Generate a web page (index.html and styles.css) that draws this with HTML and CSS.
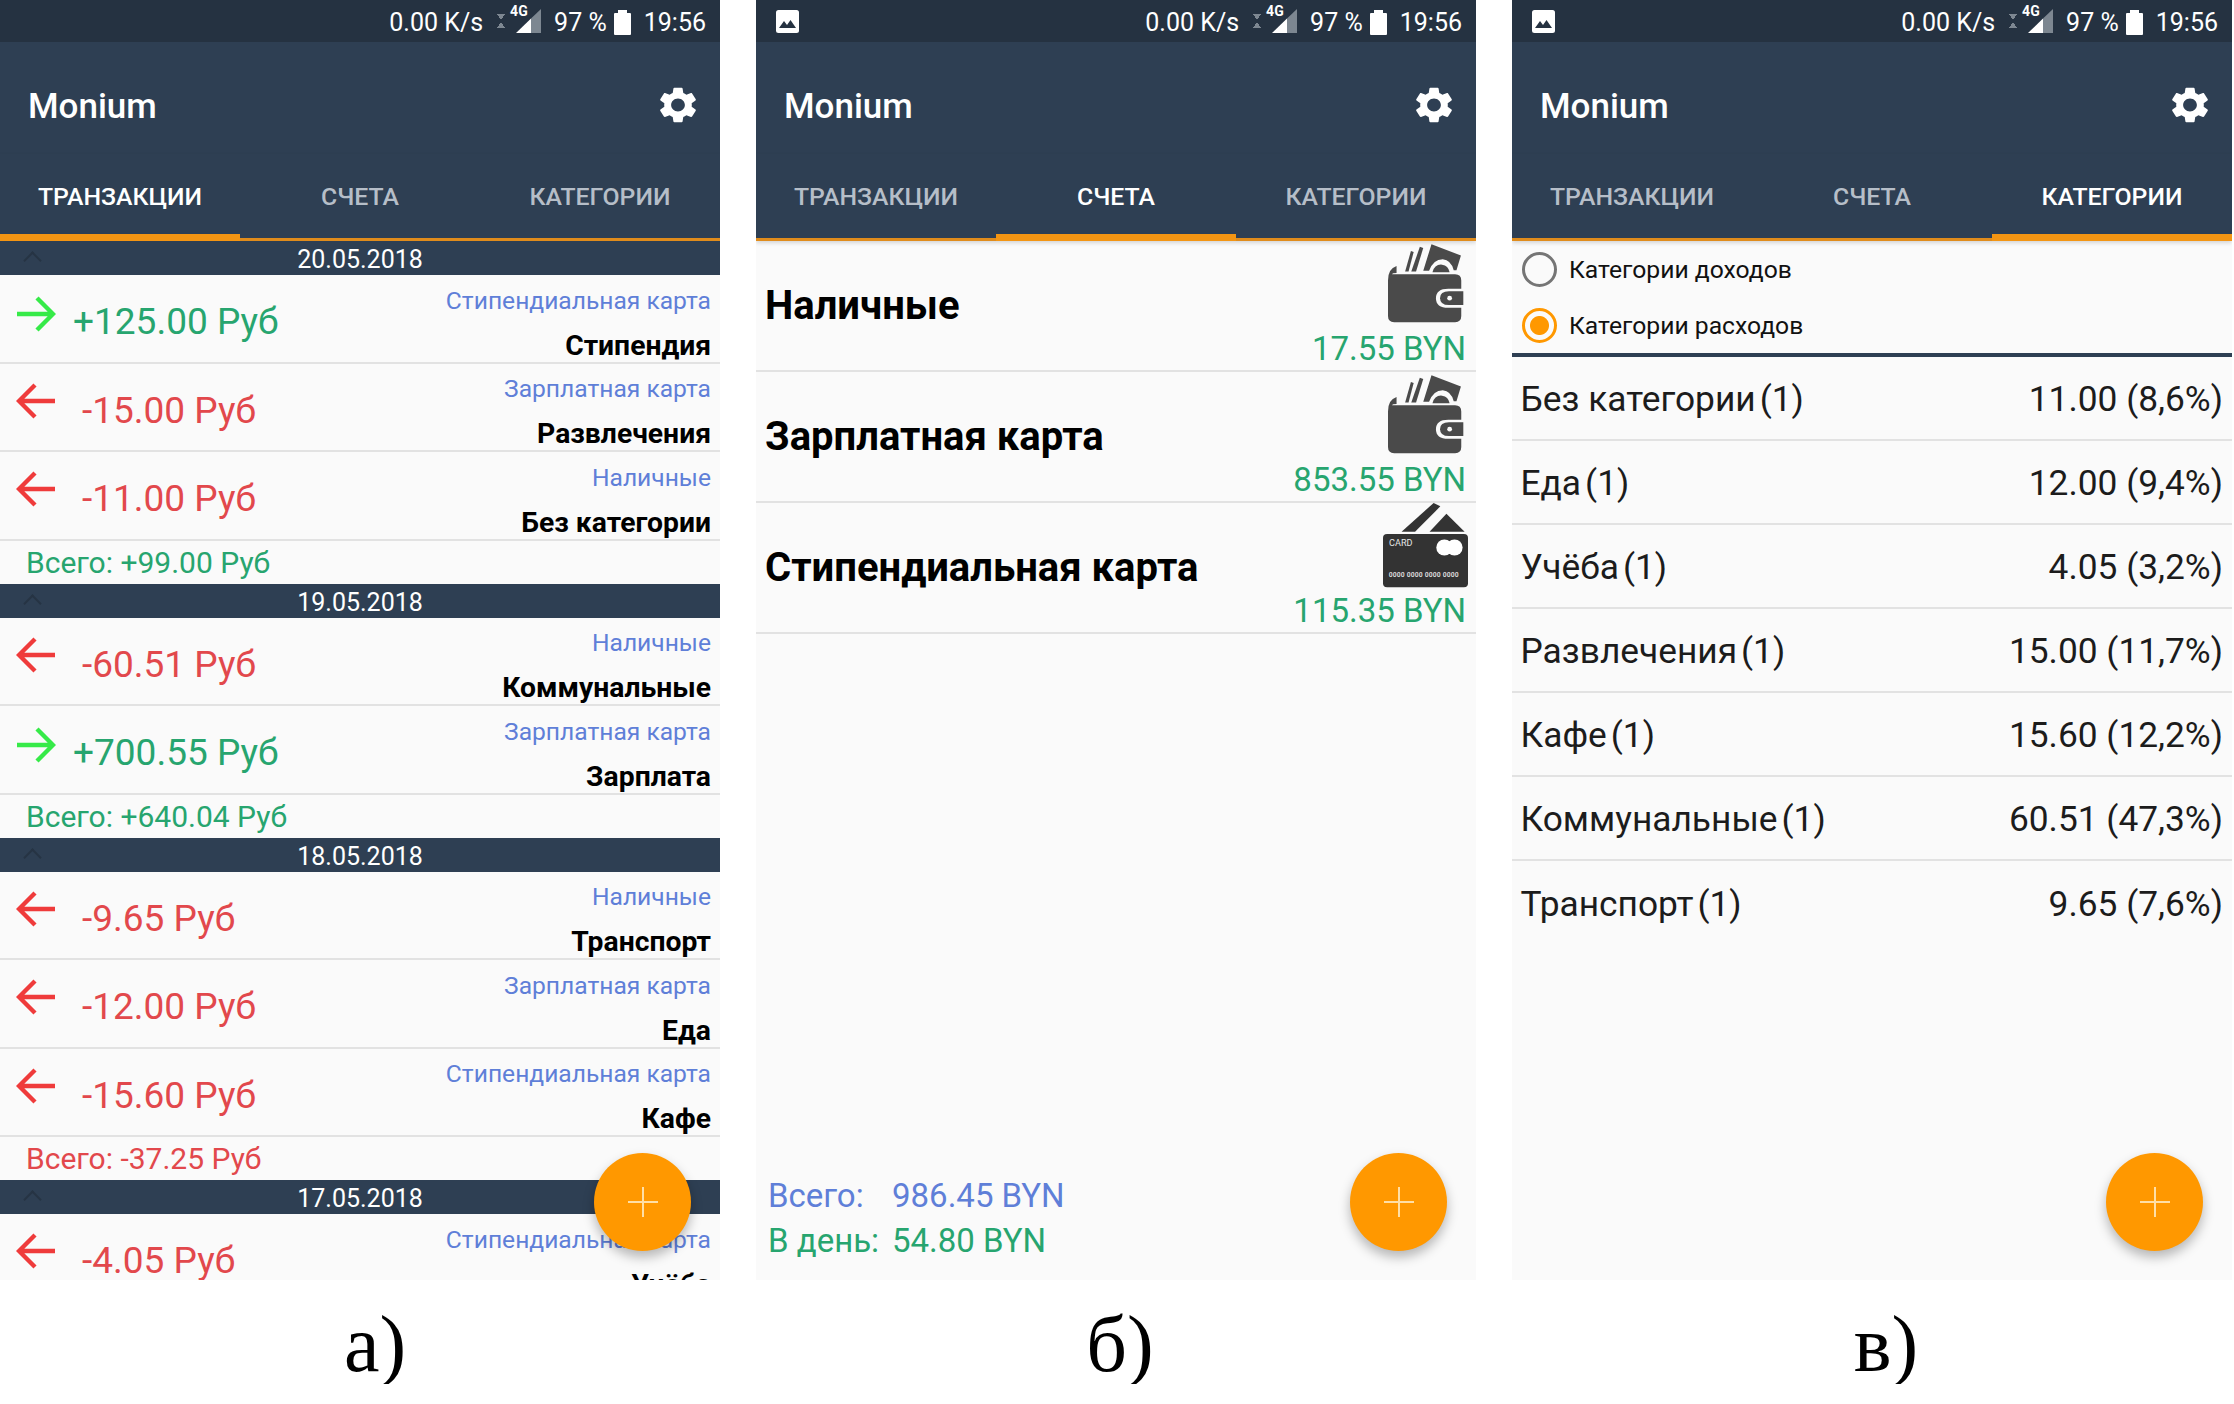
FILE: index.html
```html
<!DOCTYPE html>
<html>
<head>
	<meta charset="utf-8">
	<title>Monium</title>
	<link rel="stylesheet" href="styles.css">
</head>
<body>
	<svg class="defs" width="0" height="0">
		<symbol id="gear" viewBox="2.6 2 18.8 20" preserveAspectRatio="none">
			<path d="M19.14 12.94c.04-.3.06-.61.06-.94 0-.32-.02-.64-.07-.94l2.03-1.58c.18-.14.23-.41.12-.61l-1.92-3.32c-.12-.22-.37-.29-.59-.22l-2.39.96c-.5-.38-1.03-.7-1.62-.94l-.36-2.54c-.04-.24-.24-.41-.48-.41h-3.84c-.24 0-.43.17-.47.41l-.36 2.54c-.59.24-1.13.57-1.62.94l-2.39-.96c-.22-.08-.47 0-.59.22L2.74 8.87c-.12.21-.08.47.12.61l2.03 1.58c-.05.3-.09.63-.09.94s.02.64.07.94l-2.03 1.58c-.18.14-.23.41-.12.61l1.92 3.32c.12.22.37.29.59.22l2.39-.96c.5.38 1.03.7 1.62.94l.36 2.54c.05.24.24.41.48.41h3.84c.24 0 .44-.17.47-.41l.36-2.54c.59-.24 1.13-.56 1.62-.94l2.39.96c.22.08.47 0 .59-.22l1.92-3.32c.12-.22.07-.47-.12-.61l-2.01-1.58zM12 15.6c-1.98 0-3.6-1.62-3.6-3.6s1.62-3.6 3.6-3.6 3.6 1.62 3.6 3.6-1.62 3.6-3.6 3.6z"/>
		</symbol>
		<symbol id="signal" viewBox="0 0 25 24">
			<polygon points="15,9.600 25,0 25,24 15,24" fill="#7d8791"/>
			<polygon points="0,24 15,9.600 15,24" fill="#fff"/>
		</symbol>
		<symbol id="picture" viewBox="0 0 23 23">
			<rect width="23" height="23" rx="2.500" fill="#fff"/>
			<polygon points="3,18 8,11 11,15 14.500,10 20,18" fill="#253241"/>
		</symbol>
		<symbol id="arrow-in" viewBox="0 0 40 36">
			<path d="M1 18H37M21 2L37 18L21 34" fill="none" stroke-width="4.400"/>
		</symbol>
		<symbol id="arrow-out" viewBox="0 0 40 36">
			<path d="M39 18H3M19 2L3 18L19 34" fill="none" stroke-width="4.400"/>
		</symbol>
		<symbol id="wallet" viewBox="0 0 222 230">
			<path d="M0 106Q0 72 25 64V84Q12 84 12 88H196Q214 88 214 106V130H176Q140 130 140 158Q140 186 176 186H214V210Q214 228 196 228H18Q0 228 0 210Z"/>
			<path d="M178 138H220V178H178Q152 178 152 158Q152 138 178 138Z"/>
			<circle cx="180" cy="158" r="7" fill="#fafafa"/>
			<path d="M50 80L67 20L75 23L60 80Z"/>
			<path d="M68 80L93 8L103 11L82 80Z"/>
			<path d="M103 78L127 0L213 33L200 76H192Q184 46 160 44Q132 44 120 78Z"/>
			<path d="M130 82Q136 58 158 60Q176 62 180 82Z"/>
		</symbol>
	</svg>

	<div class="screens">

		<div class="column">
			<div class="phone">
				<div class="status">
					<span>0.00 K/s</span>
					<span class="updown"></span>
					<span class="net">4G</span>
					<svg class="signal"><use href="#signal"/></svg>
					<span class="percent">97 %</span>
					<span class="battery"></span>
					<span class="clock">19:56</span>
				</div>
				<div class="appbar">
					<div class="title">Monium</div>
					<svg class="gear"><use href="#gear"/></svg>
				</div>
				<div class="tabs">
					<div class="tab active">ТРАНЗАКЦИИ</div>
					<div class="tab">СЧЕТА</div>
					<div class="tab">КАТЕГОРИИ</div>
				</div>
				<div class="content">
					<div class="date"><span class="chevron"></span>20.05.2018</div>
					<div class="row in">
						<svg class="arrow"><use href="#arrow-in"/></svg>
						<div class="amount">+125.00 Руб</div>
						<div class="info"><div class="account">Стипендиальная карта</div><div class="category">Стипендия</div></div>
					</div>
					<div class="row out">
						<svg class="arrow"><use href="#arrow-out"/></svg>
						<div class="amount">-15.00 Руб</div>
						<div class="info"><div class="account">Зарплатная карта</div><div class="category">Развлечения</div></div>
					</div>
					<div class="row out">
						<svg class="arrow"><use href="#arrow-out"/></svg>
						<div class="amount">-11.00 Руб</div>
						<div class="info"><div class="account">Наличные</div><div class="category">Без категории</div></div>
					</div>
					<div class="total plus">Всего: +99.00 Руб</div>

					<div class="date"><span class="chevron"></span>19.05.2018</div>
					<div class="row out">
						<svg class="arrow"><use href="#arrow-out"/></svg>
						<div class="amount">-60.51 Руб</div>
						<div class="info"><div class="account">Наличные</div><div class="category">Коммунальные</div></div>
					</div>
					<div class="row in">
						<svg class="arrow"><use href="#arrow-in"/></svg>
						<div class="amount">+700.55 Руб</div>
						<div class="info"><div class="account">Зарплатная карта</div><div class="category">Зарплата</div></div>
					</div>
					<div class="total plus">Всего: +640.04 Руб</div>

					<div class="date"><span class="chevron"></span>18.05.2018</div>
					<div class="row out">
						<svg class="arrow"><use href="#arrow-out"/></svg>
						<div class="amount">-9.65 Руб</div>
						<div class="info"><div class="account">Наличные</div><div class="category">Транспорт</div></div>
					</div>
					<div class="row out">
						<svg class="arrow"><use href="#arrow-out"/></svg>
						<div class="amount">-12.00 Руб</div>
						<div class="info"><div class="account">Зарплатная карта</div><div class="category">Еда</div></div>
					</div>
					<div class="row out">
						<svg class="arrow"><use href="#arrow-out"/></svg>
						<div class="amount">-15.60 Руб</div>
						<div class="info"><div class="account">Стипендиальная карта</div><div class="category">Кафе</div></div>
					</div>
					<div class="total minus">Всего: -37.25 Руб</div>

					<div class="date"><span class="chevron"></span>17.05.2018</div>
					<div class="row out">
						<svg class="arrow"><use href="#arrow-out"/></svg>
						<div class="amount">-4.05 Руб</div>
						<div class="info"><div class="account">Стипендиальная карта</div><div class="category">Учёба</div></div>
					</div>
				</div>
				<div class="fab"></div>
			</div>
			<div class="caption caption-a">а)</div>
		</div>

		<div class="column">
			<div class="phone">
				<div class="status">
					<svg class="picture"><use href="#picture"/></svg>
					<span>0.00 K/s</span>
					<span class="updown"></span>
					<span class="net">4G</span>
					<svg class="signal"><use href="#signal"/></svg>
					<span class="percent">97 %</span>
					<span class="battery"></span>
					<span class="clock">19:56</span>
				</div>
				<div class="appbar">
					<div class="title">Monium</div>
					<svg class="gear"><use href="#gear"/></svg>
				</div>
				<div class="tabs">
					<div class="tab">ТРАНЗАКЦИИ</div>
					<div class="tab active">СЧЕТА</div>
					<div class="tab">КАТЕГОРИИ</div>
				</div>
				<div class="content accounts">
					<div class="acc">
						<div class="acc-name">Наличные</div>
						<div class="acc-side">
							<svg class="wallet"><use href="#wallet"/></svg>
							<div class="acc-sum">17.55 BYN</div>
						</div>
					</div>
					<div class="acc">
						<div class="acc-name">Зарплатная карта</div>
						<div class="acc-side">
							<svg class="wallet"><use href="#wallet"/></svg>
							<div class="acc-sum">853.55 BYN</div>
						</div>
					</div>
					<div class="acc">
						<div class="acc-name">Стипендиальная карта</div>
						<div class="acc-side">
							<svg class="cardicon" viewBox="0 0 252 252">
								<polygon points="55,85 150,0 170,10 95,85"/>
								<polygon points="138,85 188,32 242,85"/>
								<rect y="92" width="252" height="158" rx="12"/>
								<circle cx="182" cy="132" r="24" fill="#fff"/>
								<circle cx="212" cy="132" r="24" fill="#fff"/>
								<text x="18" y="128" class="card-label">CARD</text>
								<text x="17" y="218" class="card-digits">0000 0000 0000 0000</text>
							</svg>
							<div class="acc-sum">115.35 BYN</div>
						</div>
					</div>
					<div class="summary">
						<div class="blue">Всего:</div><div class="blue">986.45 BYN</div>
						<div class="green">В день:</div><div class="green">54.80 BYN</div>
					</div>
				</div>
				<div class="fab"></div>
			</div>
			<div class="caption caption-b">б)</div>
		</div>

		<div class="column">
			<div class="phone">
				<div class="status">
					<svg class="picture"><use href="#picture"/></svg>
					<span>0.00 K/s</span>
					<span class="updown"></span>
					<span class="net">4G</span>
					<svg class="signal"><use href="#signal"/></svg>
					<span class="percent">97 %</span>
					<span class="battery"></span>
					<span class="clock">19:56</span>
				</div>
				<div class="appbar">
					<div class="title">Monium</div>
					<svg class="gear"><use href="#gear"/></svg>
				</div>
				<div class="tabs">
					<div class="tab">ТРАНЗАКЦИИ</div>
					<div class="tab">СЧЕТА</div>
					<div class="tab active">КАТЕГОРИИ</div>
				</div>
				<div class="content">
					<div class="radios">
						<div class="radio"><span class="dot"></span>Категории доходов</div>
						<div class="radio checked"><span class="dot"></span>Категории расходов</div>
					</div>
					<div class="cat"><div>Без категории<span class="count">(1)</span></div><div>11.00 (8,6%)</div></div>
					<div class="cat"><div>Еда<span class="count">(1)</span></div><div>12.00 (9,4%)</div></div>
					<div class="cat"><div>Учёба<span class="count">(1)</span></div><div>4.05 (3,2%)</div></div>
					<div class="cat"><div>Развлечения<span class="count">(1)</span></div><div>15.00 (11,7%)</div></div>
					<div class="cat"><div>Кафе<span class="count">(1)</span></div><div>15.60 (12,2%)</div></div>
					<div class="cat"><div>Коммунальные<span class="count">(1)</span></div><div>60.51 (47,3%)</div></div>
					<div class="cat last"><div>Транспорт<span class="count">(1)</span></div><div>9.65 (7,6%)</div></div>
				</div>
				<div class="fab"></div>
			</div>
			<div class="caption caption-c">в)</div>
		</div>

	</div>
</body>
</html>
```

FILE: styles.css
```css
body{
	margin:0;
	background:#fff;
	font-family:Roboto,"Liberation Sans",sans-serif;
}
.defs{
	position:absolute;
}
.screens{
	display:flex;
	gap:36px;
}
.column{
	width:720px;
}
.phone{
	position:relative;
	height:1280px;
	overflow:hidden;
	background:#fafafa;
	display:flex;
	flex-direction:column;
}

/* status bar */
.status{
	box-sizing:border-box;
	flex:none;
	height:42px;
	background:#253241;
	color:#fff;
	font-size:25px;
	display:flex;
	align-items:center;
	justify-content:flex-end;
	padding:2px 14px 0 20px;
}
.picture{
	width:23px;
	height:23px;
	margin:-2px auto 0 0;
}
.updown{
	width:8px;
	height:14px;
	margin:-2px 0 0 14px;
	background:
		linear-gradient(to top right,transparent 50%,#7d8791 50%) 0 0/4px 6px no-repeat,
		linear-gradient(to top left,transparent 50%,#7d8791 50%) 4px 0/4px 6px no-repeat,
		linear-gradient(to bottom right,transparent 50%,#7d8791 50%) 0 8px/4px 6px no-repeat,
		linear-gradient(to bottom left,transparent 50%,#7d8791 50%) 4px 8px/4px 6px no-repeat;
}
.net{
	font-size:14px;
	font-weight:700;
	line-height:14px;
	width:0;
	margin:-22px 0 0 5px;
}
.signal{
	width:25px;
	height:24px;
	margin:-2px 0 0 6px;
}
.percent{
	margin-left:13px;
}
.battery{
	position:relative;
	width:17px;
	height:22px;
	margin:3px 0 0 7px;
	background:#fff;
	border-radius:1px;
}
.battery:before{
	content:"";
	position:absolute;
	left:4px;
	top:-3px;
	width:9px;
	height:3px;
	background:#fff;
}
.clock{
	margin-left:13px;
}

/* app bar and tabs */
.appbar{
	box-sizing:border-box;
	flex:none;
	height:112px;
	background:#2e3f53;
	color:#fff;
	display:flex;
	align-items:center;
	justify-content:space-between;
	padding:14px 24px 0 28px;
}
.title{
	font-size:35px;
	font-weight:500;
	margin-top:2px;
}
.gear{
	width:36px;
	height:36px;
	fill:#fff;
	margin-top:-1px;
}
.tabs{
	flex:none;
	height:84px;
	display:flex;
	background:#2e3f53;
	border-bottom:3px solid #e08c1c;
	box-shadow:0 2px 4px rgba(0,0,0,.15);
	position:relative;
}
.tab{
	flex:1;
	position:relative;
	text-align:center;
	font-size:24.8px;
	font-weight:500;
	line-height:85px;
	color:#b6bec8;
}
.tab.active{
	color:#fff;
}
.tab.active:after{
	content:"";
	position:absolute;
	left:0;
	right:0;
	bottom:-3px;
	height:7px;
	background:#f39513;
}

.content{
	flex:1;
	display:flex;
	flex-direction:column;
	min-height:0;
}

/* transactions */
.date{
	position:relative;
	flex:none;
	height:34px;
	line-height:38px;
	background:#2e3f53;
	color:#fff;
	text-align:center;
	font-size:25px;
}
.chevron{
	position:absolute;
	left:26px;
	top:13px;
	width:11px;
	height:11px;
	border-left:2px solid #263444;
	border-top:2px solid #263444;
	transform:rotate(45deg);
}
.row{
	flex:none;
	box-sizing:border-box;
	height:88.5px;
	border-bottom:2px solid #e2e2e2;
	display:flex;
	padding:0 9px 0 16px;
}
.arrow{
	width:40px;
	height:36px;
	margin-top:21px;
	flex:none;
}
.in .arrow{
	stroke:#36ea48;
}
.out .arrow{
	stroke:#ef3b3b;
	margin-top:19px;
}
.amount{
	font-size:37px;
	margin-top:24px;
	line-height:46px;
}
.in .amount{
	color:#27a56f;
	margin-left:17px;
}
.out .amount{
	color:#e2484c;
	margin-left:26px;
}
.info{
	margin-left:auto;
	text-align:right;
}
.account{
	font-size:24.6px;
	line-height:30px;
	margin-top:10.5px;
	color:#5f7fd8;
}
.category{
	font-size:28.3px;
	font-weight:700;
	line-height:32px;
	margin-top:14px;
	color:#000;
}
.total{
	flex:none;
	height:43px;
	line-height:44px;
	padding-left:26px;
	font-size:30px;
}
.plus{
	color:#27a56f;
}
.minus{
	color:#e2484c;
}

/* accounts */
.acc{
	box-sizing:border-box;
	height:131px;
	flex:none;
	border-bottom:2px solid #e2e2e2;
	display:flex;
	justify-content:space-between;
	padding:0 10px 0 9px;
}
.acc-name{
	font-size:40px;
	font-weight:700;
	margin-top:40px;
	line-height:50px;
	color:#000;
}
.acc-side{
	display:flex;
	flex-direction:column;
	align-items:flex-end;
}
.wallet{
	width:76px;
	height:79px;
	margin:3px 2px 0 0;
	fill:#4a4a4a;
}
.cardicon{
	width:85px;
	height:85px;
	margin:0 -2px -3px 0;
	fill:#333;
}
.card-label{
	font-size:27px;
	fill:#e6e6e6;
}
.card-digits{
	font-size:20px;
	font-weight:700;
	letter-spacing:.5px;
	fill:#d8d8d8;
}
.acc-sum{
	font-size:33px;
	line-height:40px;
	margin-top:6px;
	color:#27a56f;
}
.summary{
	margin-top:auto;
	padding:0 0 17px 12px;
	display:grid;
	grid-template-columns:124px auto;
	justify-content:start;
	font-size:33px;
	line-height:45px;
}
.blue{
	color:#5f7fd8;
}
.green{
	color:#27a56f;
}

/* categories */
.radios{
	flex:none;
	height:112px;
	border-bottom:4px solid #2e3f53;
	padding-left:10px;
}
.radio{
	height:56px;
	display:flex;
	align-items:center;
	font-size:24.7px;
	color:#111;
}
.dot{
	box-sizing:border-box;
	width:35px;
	height:35px;
	margin-right:12px;
	border:3px solid #757575;
	border-radius:50%;
}
.checked .dot{
	border-color:#ff9800;
	background:radial-gradient(circle,#ff9800 0 9px,transparent 10px);
}
.cat{
	flex:none;
	box-sizing:border-box;
	height:84px;
	border-bottom:2px solid #e2e2e2;
	display:flex;
	align-items:center;
	justify-content:space-between;
	padding:2px 9px 0 8.5px;
	font-size:35.3px;
	color:#1c1c1c;
}
.cat.last{
	border-bottom:0;
}
.count{
	margin-left:4px;
}

/* add button */
.fab{
	position:absolute;
	right:29px;
	bottom:29px;
	width:97px;
	height:98px;
	border-radius:50%;
	background:#ff9800;
	box-shadow:0 6px 12px rgba(0,0,0,.28);
}
.fab:before,.fab:after{
	content:"";
	position:absolute;
	background:#ffdfa6;
}
.fab:before{
	left:34px;
	top:48px;
	width:30px;
	height:2px;
}
.fab:after{
	left:48px;
	top:34px;
	width:2px;
	height:30px;
}

/* captions under the screens */
.caption{
	font-family:"Liberation Serif",serif;
	font-size:80px;
	line-height:80px;
	text-align:center;
	color:#000;
	margin-top:24px;
}
.caption-a{
	padding-left:30px;
}
.caption-b{
	padding-left:8px;
}
.caption-c{
	padding-left:28px;
}
```
